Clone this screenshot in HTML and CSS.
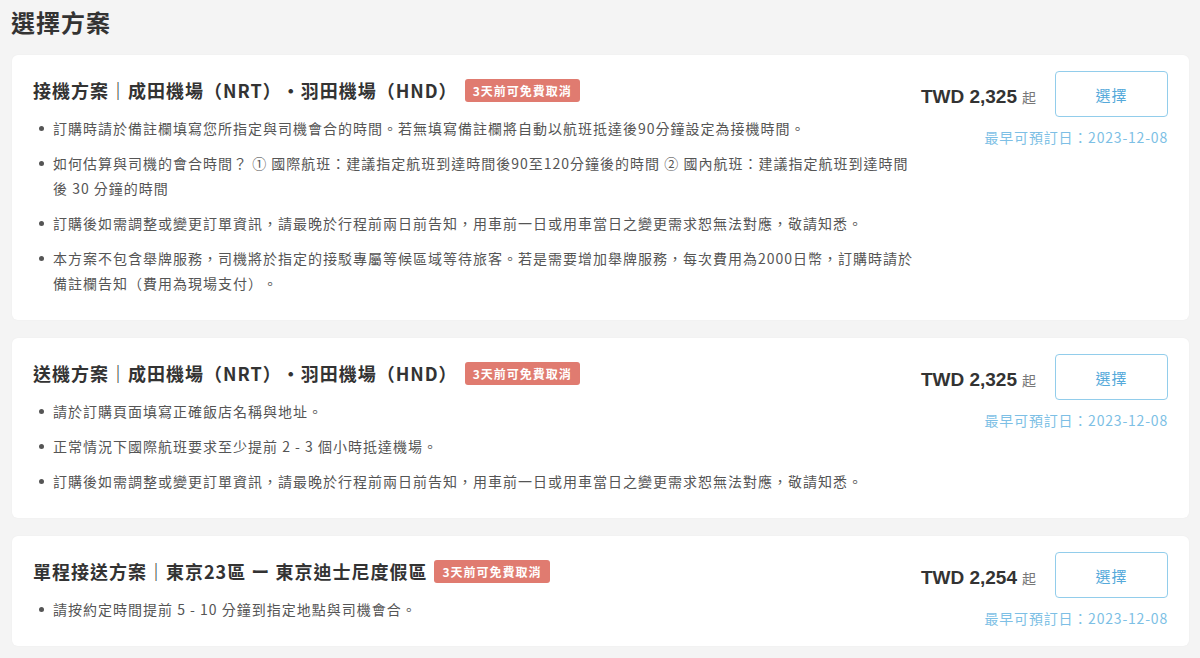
FILE: index.html
```html
<!DOCTYPE html>
<html lang="zh-Hant">
<head>
<meta charset="utf-8">
<title>選擇方案</title>
<link rel="stylesheet" href="styles.css">
</head>
<body>
<main class="page">
  <h1 class="page-title">選擇方案</h1>

  <section class="plan">
    <div class="plan-main">
      <div class="plan-head">
        <h2 class="plan-title">接機方案｜成田機場（NRT）・羽田機場（HND）</h2>
        <span class="badge">3天前可免費取消</span>
      </div>
      <ul class="plan-notes">
        <li>訂購時請於備註欄填寫您所指定與司機會合的時間。若無填寫備註欄將自動以航班抵達後90分鐘設定為接機時間。</li>
        <li>如何估算與司機的會合時間？ ① 國際航班：建議指定航班到達時間後90至120分鐘後的時間 ② 國內航班：建議指定航班到達時間後 30 分鐘的時間</li>
        <li>訂購後如需調整或變更訂單資訊，請最晚於行程前兩日前告知，用車前一日或用車當日之變更需求恕無法對應，敬請知悉。</li>
        <li>本方案不包含舉牌服務，司機將於指定的接駁專屬等候區域等待旅客。若是需要增加舉牌服務，每次費用為2000日幣，訂購時請於備註欄告知（費用為現場支付）。</li>
      </ul>
    </div>
    <div class="plan-side">
      <div class="price-row">
        <div class="price"><span class="amount">TWD 2,325</span><span class="from">起</span></div>
        <button class="select-btn" type="button">選擇</button>
      </div>
      <div class="earliest">最早可預訂日：2023-12-08</div>
    </div>
  </section>

  <section class="plan">
    <div class="plan-main">
      <div class="plan-head">
        <h2 class="plan-title">送機方案｜成田機場（NRT）・羽田機場（HND）</h2>
        <span class="badge">3天前可免費取消</span>
      </div>
      <ul class="plan-notes">
        <li>請於訂購頁面填寫正確飯店名稱與地址。</li>
        <li>正常情況下國際航班要求至少提前 2 - 3 個小時抵達機場。</li>
        <li>訂購後如需調整或變更訂單資訊，請最晚於行程前兩日前告知，用車前一日或用車當日之變更需求恕無法對應，敬請知悉。</li>
      </ul>
    </div>
    <div class="plan-side">
      <div class="price-row">
        <div class="price"><span class="amount">TWD 2,325</span><span class="from">起</span></div>
        <button class="select-btn" type="button">選擇</button>
      </div>
      <div class="earliest">最早可預訂日：2023-12-08</div>
    </div>
  </section>

  <section class="plan">
    <div class="plan-main">
      <div class="plan-head">
        <h2 class="plan-title">單程接送方案｜東京23區 ー 東京迪士尼度假區</h2>
        <span class="badge">3天前可免費取消</span>
      </div>
      <ul class="plan-notes">
        <li>請按約定時間提前 5 - 10 分鐘到指定地點與司機會合。</li>
      </ul>
    </div>
    <div class="plan-side">
      <div class="price-row">
        <div class="price"><span class="amount">TWD 2,254</span><span class="from">起</span></div>
        <button class="select-btn" type="button">選擇</button>
      </div>
      <div class="earliest">最早可預訂日：2023-12-08</div>
    </div>
  </section>
</main>
</body>
</html>
```

FILE: styles.css
```css
* { box-sizing: border-box; }

html, body {
  margin: 0;
  padding: 0;
  background: #f4f4f4;
}

body {
  font-family: "Noto Sans CJK TC", "Noto Sans", sans-serif;
  color: #333;
  text-spacing-trim: space-all;
}

.page {
  padding: 5px 11px 20px 12px;
}

.page-title {
  margin: 0 0 16px -1px;
  font-size: 24px;
  line-height: 34px;
  font-weight: 700;
  color: #333;
  letter-spacing: 1px;
}

.plan {
  display: flex;
  align-items: flex-start;
  background: #fff;
  border-radius: 6px;
  padding: 16px 21px 17px 21px;
  margin-bottom: 18px;
  box-shadow: 0 0 2px rgba(0, 0, 0, 0.04);
}

.plan-main {
  flex: 1 1 auto;
  min-width: 0;
  padding-top: 6px;
  padding-bottom: 7px;
}

.plan-head {
  display: flex;
  align-items: center;
  height: 26px;
}

.plan-title {
  margin: 0;
  font-size: 18px;
  line-height: 26px;
  font-weight: 700;
  letter-spacing: 1px;
  color: #333;
  white-space: nowrap;
}

.badge {
  margin-left: 7px;
  display: inline-block;
  height: 23px;
  line-height: 23px;
  padding: 0 8px;
  background: #e07b70;
  color: #fff;
  font-size: 12px;
  font-weight: 700;
  letter-spacing: 1px;
  border-radius: 3px;
  white-space: nowrap;
}

.plan-notes {
  margin: 13px 0 0 0;
  padding: 0 0 0 20px;
  list-style: none;
}

.plan-notes li {
  position: relative;
  font-size: 14px;
  line-height: 25px;
  letter-spacing: 1px;
  color: #555;
  margin-bottom: 10px;
}

.plan-notes li:last-child {
  margin-bottom: 0;
}

.plan-notes li::before {
  content: "";
  position: absolute;
  left: -14px;
  top: 10px;
  width: 5px;
  height: 5px;
  border-radius: 50%;
  background: #555;
}

.plan-side {
  flex: 0 0 auto;
  display: flex;
  flex-direction: column;
  align-items: flex-end;
}

.price-row {
  display: flex;
  align-items: center;
}

.price {
  display: flex;
  align-items: baseline;
  margin-top: 6px;
}

.amount {
  font-family: "Liberation Sans", Arial, sans-serif;
  font-size: 19px;
  font-weight: 700;
  color: #333;
}

.from {
  margin-left: 5px;
  font-size: 14px;
  color: #777;
}

.select-btn {
  margin-left: 19px;
  width: 113px;
  height: 46px;
  background: #fff;
  border: 1px solid #92cdeb;
  border-radius: 4px;
  color: #55a9da;
  font-family: "Noto Sans CJK TC", "Noto Sans", sans-serif;
  font-size: 15px;
  letter-spacing: 1px;
  padding: 0;
  cursor: pointer;
}

.earliest {
  margin-top: 9px;
  font-size: 14px;
  line-height: 22px;
  letter-spacing: 0.8px;
  color: #7dbfe5;
}
```
